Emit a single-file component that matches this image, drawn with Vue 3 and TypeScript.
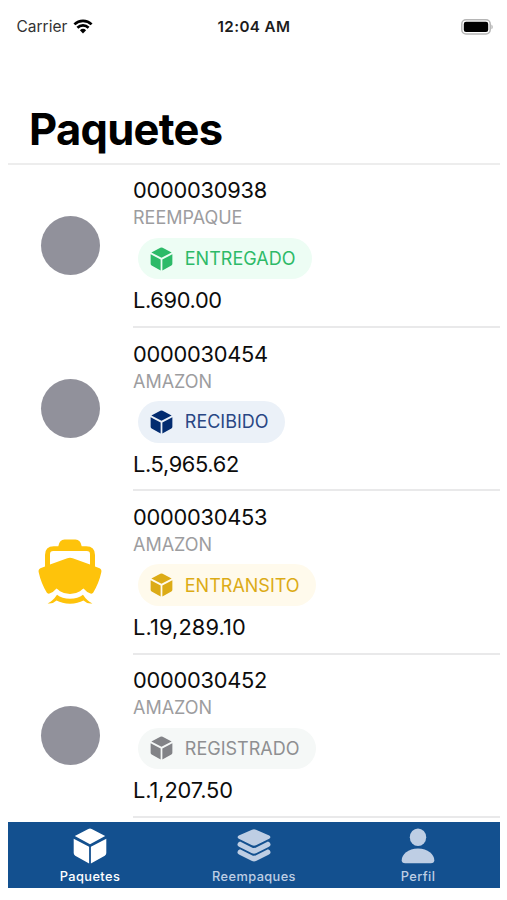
<script setup lang="ts">
interface Parcel {
  id: string
  origin: string
  status: string
  tone: 'delivered' | 'received' | 'transit' | 'registered'
  price: string
}

const parcels: Parcel[] = [
  { id: '0000030938', origin: 'REEMPAQUE', status: 'ENTREGADO', tone: 'delivered', price: 'L.690.00' },
  { id: '0000030454', origin: 'AMAZON', status: 'RECIBIDO', tone: 'received', price: 'L.5,965.62' },
  { id: '0000030453', origin: 'AMAZON', status: 'ENTRANSITO', tone: 'transit', price: 'L.19,289.10' },
  { id: '0000030452', origin: 'AMAZON', status: 'REGISTRADO', tone: 'registered', price: 'L.1,207.50' },
]

function tracking(price: string): string {
  const ones = price.split('1').length - 1
  return `${(-0.35 + ones * 0.23).toFixed(2)}px`
}
</script>

<template>
  <div class="screen">
    <div class="status-bar">
      <div class="carrier">
        <span>Carrier</span>
        <svg class="wifi" viewBox="0 0 20 15">
          <path d="M1.4 5.4A12.4 12.4 0 0 1 18.6 5.4" />
          <path d="M4.4 8.7A8.1 8.1 0 0 1 15.6 8.7" />
          <path class="dot" d="M6.9 11.3A4.5 4.5 0 0 1 13.1 11.3L10 14.5Z" />
        </svg>
      </div>
      <div class="clock">12:04 AM</div>
      <svg class="battery" viewBox="0 0 32 16">
        <rect class="shell" x="0.8" y="0.8" width="28.4" height="14.2" rx="4.2" />
        <rect x="2.8" y="2.8" width="24.4" height="10.2" rx="2.2" />
        <path class="tip" d="M30.4 5.6Q31.8 6.2 31.8 7.9T30.4 10.2Z" />
      </svg>
    </div>
    <header class="heading">
      <h1>Paquetes</h1>
    </header>
    <main class="list">
      <article v-for="p in parcels" :key="p.id" class="row">
        <div class="thumb">
          <svg v-if="p.tone === 'transit'" class="boat" viewBox="0 0 64 65">
            <path fill-rule="evenodd" d="M7 27.6V16Q7 7.2 15.8 7.2H20.3Q21.5 .5 26.5 .5H37.5Q42.5 .5 43.7 7.2H48.2Q57 7.2 57 16V27.6L61.6 29.3Q64 30.6 63.3 33.3C61.8 40.5 58.7 48.1 55.3 53.6Q54.4 55 52.5 54.5Q48.5 53.3 45.5 49.6Q44.3 50.3 42 52.2Q38 54.9 32 54.9T22 52.2Q19.7 50.3 18.5 49.6Q15.5 53.3 11.5 54.5Q9.6 55 8.7 53.6C5.3 48.1 2.2 40.5.7 33.3Q0 30.6 2.4 29.3ZM12 25.4L29.3 19.2Q32 18.1 34.7 19.2L52 25.4V15.2Q52 12 48.8 12H15.2Q12 12 12 15.2Z" />
            <path d="M9.6 64.5Q15 62 19 55.8Q24 59.8 32 59.8T45 55.8Q49 62 54.4 64.5Q49 65.2 45.5 61.6Q40 64.7 32 64.7T18.5 61.6Q15 65.2 9.6 64.5Z" />
          </svg>
          <span v-else class="circle"></span>
        </div>
        <div class="body">
          <div class="number">{{ p.id }}</div>
          <div class="origin">{{ p.origin }}</div>
          <div class="badge" :class="p.tone">
            <svg class="cube" viewBox="0 0 34 36">
              <path d="M15.3 1Q17 .2 18.7 1L32.2 8.1L17 16.3L1.8 8.1ZM.7 10.7L15.7 18.8V35.2L2.2 27.7Q.7 26.8.7 25ZM33.3 10.7V25Q33.3 26.8 31.8 27.7L18.3 35.2V18.8Z" />
            </svg>
            <span>{{ p.status }}</span>
          </div>
          <div class="price" :style="{ letterSpacing: tracking(p.price) }">{{ p.price }}</div>
        </div>
      </article>
    </main>
    <nav class="tabs">
      <div class="tab active">
        <svg viewBox="0 0 34 36">
          <path d="M15.3 1Q17 .2 18.7 1L32.2 8.1L17 16.3L1.8 8.1ZM.7 10.7L16.1 18.8V35.4L2.2 27.7Q.7 26.8.7 25ZM33.3 10.7V25Q33.3 26.8 31.8 27.7L17.9 35.4V18.8Z" />
        </svg>
        <span>Paquetes</span>
      </div>
      <div class="tab">
        <svg viewBox="0 0 34 36">
          <path d="M15 1.7Q17 .8 19 1.7L32.2 7.6Q34.6 9.2 32.2 10.8L19 17.2Q17 18.1 15 17.2L1.8 10.8Q-.6 9.2 1.8 7.6ZM3 13.4L14.9 19.4Q17 20.4 19.1 19.4L31 13.4Q33.6 14.2 33.6 16.4Q33.6 17.9 32 18.8L19 25.3Q17 26.2 15 25.3L2 18.8Q.4 17.9.4 16.4Q.4 14.2 3 13.4ZM3 21.2L14.9 27.2Q17 28.2 19.1 27.2L31 21.2Q33.6 22 33.6 24.2Q33.6 25.7 32 26.6L19 33.1Q17 34 15 33.1L2 26.6Q.4 25.7.4 24.2Q.4 22 3 21.2Z" />
        </svg>
        <span>Reempaques</span>
      </div>
      <div class="tab">
        <svg viewBox="0 0 34 36">
          <ellipse cx="17" cy="9.3" rx="8.2" ry="8.8" />
          <path d="M4.2 35.3C1.8 35.3.7 34.2.7 32.3C.7 26.5 7.1 20.6 17 20.6S33.3 26.5 33.3 32.3C33.3 34.2 32.2 35.3 29.8 35.3Z" />
        </svg>
        <span>Perfil</span>
      </div>
    </nav>
  </div>
</template>

<style>
body {
  background: #fff;
}
</style>

<style scoped>
.screen {
  width: 507px;
  height: 900px;
  box-sizing: border-box;
  padding: 0 7px 12px 8px;
  display: flex;
  flex-direction: column;
  overflow: hidden;
  background: #fff;
  color: #0c0c0c;
  font-family: Inter, "Liberation Sans", sans-serif;
}
.status-bar {
  height: 53px;
  flex: none;
  display: grid;
  grid-template-columns: 1fr auto 1fr;
  align-items: center;
  padding: 0 7px 0 8.5px;
  font-size: 15.5px;
}
.carrier {
  display: flex;
  align-items: center;
  gap: 6px;
  color: #333;
}
.wifi {
  width: 20px;
  height: 15px;
  fill: none;
  stroke: #000;
  stroke-width: 2.7;
}
.wifi .dot {
  fill: #000;
  stroke: none;
}
.clock {
  margin-right: 1.5px;
  font-weight: 600;
  font-size: 15.2px;
  letter-spacing: 0.4px;
  color: #1c1c1c;
}
.battery {
  justify-self: end;
  width: 32px;
  height: 16px;
}
.battery .shell {
  fill: #fff;
  stroke: #b5b5b5;
  stroke-width: 1.5;
}
.battery .tip {
  fill: #b5b5b5;
}
.heading {
  height: 112px;
  flex: none;
  box-sizing: border-box;
  border-bottom: 2px solid #ededed;
  padding: 47.5px 0 0 21px;
}
h1 {
  margin: 0;
  font-size: 43.5px;
  line-height: 56px;
  font-weight: 700;
  letter-spacing: -0.7px;
  color: #000;
}
.list {
  height: 657px;
  flex: none;
  overflow: hidden;
}
.row {
  display: flex;
  height: 163.2px;
}
.thumb {
  width: 124.5px;
  flex: none;
  display: flex;
  align-items: center;
  justify-content: center;
  box-sizing: border-box;
  padding-bottom: 2px;
}
.circle {
  width: 59px;
  height: 59px;
  border-radius: 50%;
  background: #91919b;
}
.boat {
  width: 64px;
  height: 65px;
  fill: #fec30b;
}
.body {
  flex: 1;
  box-sizing: border-box;
  border-bottom: 2px solid #e9e9ea;
  padding: 11.4px 0 0 0.5px;
}
.number,
.price {
  font-size: 21.8px;
  line-height: 28px;
  letter-spacing: -0.25px;
}
.origin {
  font-size: 18px;
  line-height: 28px;
  color: #9d9d9f;
}
.badge {
  width: max-content;
  height: 41.5px;
  box-sizing: border-box;
  margin: 5.6px 0 6.9px 5px;
  padding: 0 16.2px 0 11.5px;
  border-radius: 21px;
  display: flex;
  align-items: center;
  gap: 12.3px;
  font-size: 18px;
}
.cube {
  width: 23px;
  height: 24px;
  fill: currentColor;
}
.delivered {
  color: #2dba68;
  background: #edfdf4;
}
.received {
  color: #032c70;
  background: #ebf1f8;
}
.transit {
  color: #dcab16;
  background: #fffaec;
}
.registered {
  color: #828387;
  background: #f5f8f7;
}
.received span {
  color: #294784;
}
.registered span {
  color: #8e8f91;
}
.tabs {
  height: 66px;
  flex: none;
  display: grid;
  grid-template-columns: repeat(3, 1fr);
  background: #13508f;
}
.tab {
  display: flex;
  flex-direction: column;
  align-items: center;
  padding-top: 6px;
  color: #becee4;
  font-size: 12.8px;
  line-height: 16px;
  font-weight: 500;
  letter-spacing: 0.4px;
}
.tab svg {
  width: 34px;
  height: 36px;
  margin-bottom: 5px;
  fill: currentColor;
}
.tab.active {
  color: #fff;
}
</style>
